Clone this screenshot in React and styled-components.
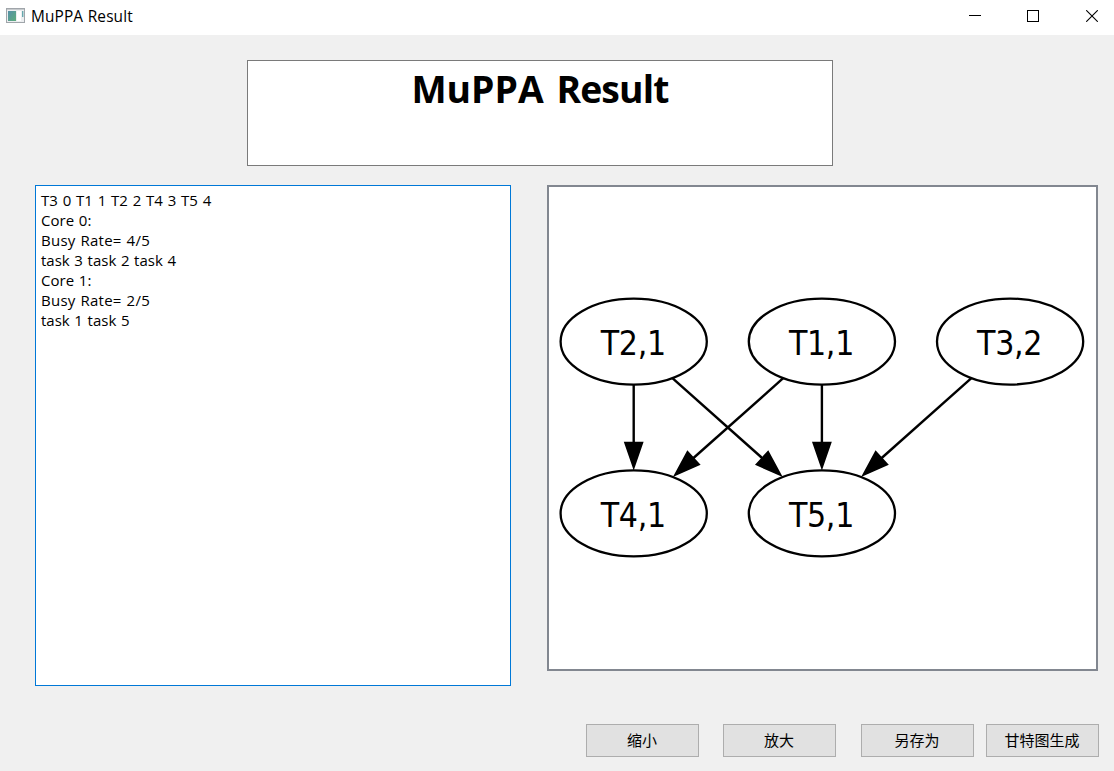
import React from "react";
import styled, { createGlobalStyle } from "styled-components";

const GlobalStyle = createGlobalStyle`
  * { box-sizing: border-box; }
  body { margin: 0; background: #f0f0f0; overflow: hidden; }
`;

const Window = styled.div`
  width: 1114px;
  height: 771px;
  display: flex;
  flex-direction: column;
  background: #f0f0f0;
  color: #000;
  font-family: "Open Sans", "Noto Sans", "Noto Sans CJK SC", sans-serif;
  font-size: 15px;
`;

const TitleBar = styled.header`
  height: 35px;
  flex: none;
  display: flex;
  align-items: flex-start;
  padding-left: 6px;
  background: #fff;
`;

const AppIcon = styled.svg`
  width: 19px;
  height: 16px;
  margin-top: 8px;
`;

const Caption = styled.span`
  flex: 1;
  margin: 7px 0 0 6px;
  font-size: 15.4px;
  line-height: 20px;
  letter-spacing: 0.12px;
  word-spacing: 0.5px;
  white-space: nowrap;
`;

const WindowControls = styled.div`
  display: flex;
  margin: 10px 16px 0 0;
`;

const ControlIcon = styled.svg`
  width: 12px;
  height: 12px;
  margin-left: ${(p) => p.$gap}px;
  fill: none;
  stroke: #000;
`;

const Content = styled.main`
  flex: 1;
  display: flex;
  flex-direction: column;
  padding: 25px 15px 14px 35px;
`;

const Heading = styled.h1`
  width: 586px;
  height: 106px;
  margin: 0 0 19px 212px;
  padding-top: 3px;
  border: 1px solid #7a7a7a;
  background: #fff;
  text-align: center;
  font-size: 37.3px;
  font-weight: 700;
  line-height: 50px;
  word-spacing: 3px;
`;

const TightWord = styled.span`
  letter-spacing: -0.85px;
`;

const Panels = styled.div`
  display: flex;
  align-items: flex-start;
  gap: 36px;
`;

const Log = styled.div`
  width: 476px;
  height: 501px;
  padding: 4px 5px;
  border: 1px solid #0078d7;
  background: #fff;
`;

const LogLine = styled.div`
  height: 20px;
  line-height: 20px;
  letter-spacing: ${(p) => p.$spacing}px;
  word-spacing: 0.7px;
  white-space: pre;
`;

const GraphPanel = styled.div`
  width: 551px;
  height: 486px;
  border: 2px solid #828790;
  background: #fff;
`;

const Graph = styled.svg`
  display: block;
  width: 547px;
  height: 482px;
`;

const NodeLabel = styled.text`
  font-family: "DejaVu Sans Condensed", "DejaVu Sans", sans-serif;
  font-stretch: condensed;
  font-size: 33.5px;
  letter-spacing: -0.3px;
`;

const Actions = styled.footer`
  display: flex;
  justify-content: flex-end;
  margin-top: auto;
`;

const ActionButton = styled.button`
  width: 113px;
  height: 33px;
  margin-left: ${(p) => p.$gap}px;
  padding: 0 1px 2px 0;
  border: 1px solid #adadad;
  border-radius: 0;
  background: #e1e1e1;
  color: #000;
  font-family: "Noto Sans CJK SC", sans-serif;
  font-size: 15px;
  font-weight: 400;
  line-height: 29px;
`;

const log = [
  { text: "T3 0 T1 1 T2 2 T4 3 T5 4", spacing: 0.08 },
  { text: "Core 0:", spacing: 0.05 },
  { text: "Busy Rate= 4/5", spacing: 0.26 },
  { text: "task 3 task 2 task 4", spacing: 0.01 },
  { text: "Core 1:", spacing: 0.05 },
  { text: "Busy Rate= 2/5", spacing: 0.26 },
  { text: "task 1 task 5", spacing: 0.01 },
];

const nodes = [
  { label: "T2,1", x: 84.7, y: 154.6 },
  { label: "T1,1", x: 272.9, y: 154.6 },
  { label: "T3,2", x: 461.1, y: 154.6 },
  { label: "T4,1", x: 84.7, y: 326.4 },
  { label: "T5,1", x: 272.9, y: 326.4 },
];

const edges = [
  { x: 84.7, dir: 0 },
  { x: 272.9, dir: 0 },
  { x: 84.7, dir: 1 },
  { x: 272.9, dir: -1 },
  { x: 461.1, dir: -1 },
];

function Edge({ x, dir }) {
  if (dir === 0) {
    return (
      <g>
        <path d={`M${x} 197.5V256`} fill="none" strokeWidth="2.4" />
        <path d={`M${x - 8.8} 255.6h17.6L${x} 281z`} strokeWidth="1.6" />
      </g>
    );
  }
  return (
    <g transform={`translate(${x} 0) scale(${dir} 1)`}>
      <path d="M38.7 191.2L129 271.5" fill="none" strokeWidth="2.4" />
      <path d="M122.6 277.5L134.4 264.6L147.2 288.4z" strokeWidth="1.6" />
    </g>
  );
}

export default function App() {
  return (
    <>
      <GlobalStyle />
      <Window>
        <TitleBar>
          <AppIcon viewBox="0 0 19 16">
            <defs>
              <linearGradient id="pane" x1="0" y1="0" x2="1" y2="1">
                <stop offset="0" stopColor="#5590a8" />
                <stop offset="1" stopColor="#5dad7c" />
              </linearGradient>
            </defs>
            <rect x="0.5" y="0.5" width="18" height="14" fill="#eceef0" stroke="#a0a5aa" />
            <path d="M1 1.5h17" stroke="#c6cacd" />
            <rect x="2" y="3" width="8" height="10" fill="url(#pane)" />
            <rect x="11" y="3" width="4" height="10" fill="#fff" />
            <rect x="16" y="3" width="1.4" height="6" fill="#66a7ad" />
          </AppIcon>
          <Caption>MuPPA Result</Caption>
          <WindowControls>
            <ControlIcon $gap={0} viewBox="0 0 12 12"><path d="M0 5.5h12" /></ControlIcon>
            <ControlIcon $gap={46} viewBox="0 0 12 12"><rect x="0.5" y="0.5" width="11" height="11" /></ControlIcon>
            <ControlIcon $gap={47} viewBox="0 0 12 12"><path d="M0.2 0.2l11.6 11.6M11.8 0.2L0.2 11.8" strokeWidth="1.1" /></ControlIcon>
          </WindowControls>
        </TitleBar>
        <Content>
          <Heading>MuPPA <TightWord>Result</TightWord></Heading>
          <Panels>
            <Log>
              {log.map((line) => (
                <LogLine key={line.text} $spacing={line.spacing}>{line.text}</LogLine>
              ))}
            </Log>
            <GraphPanel>
              <Graph viewBox="0 0 547 482">
                <g fill="#000" stroke="#000">
                  {edges.map((e, i) => <Edge key={i} {...e} />)}
                </g>
                {nodes.map((n) => (
                  <g key={n.label}>
                    <ellipse cx={n.x} cy={n.y} rx="73.1" ry="43" fill="none" stroke="#000" strokeWidth="2.3" />
                    <NodeLabel x={n.x - 33} y={n.y + 13.2}>{n.label}</NodeLabel>
                  </g>
                ))}
              </Graph>
            </GraphPanel>
          </Panels>
          <Actions>
            <ActionButton $gap={0}>缩小</ActionButton>
            <ActionButton $gap={24}>放大</ActionButton>
            <ActionButton $gap={25}>另存为</ActionButton>
            <ActionButton $gap={12}>甘特图生成</ActionButton>
          </Actions>
        </Content>
      </Window>
    </>
  );
}
